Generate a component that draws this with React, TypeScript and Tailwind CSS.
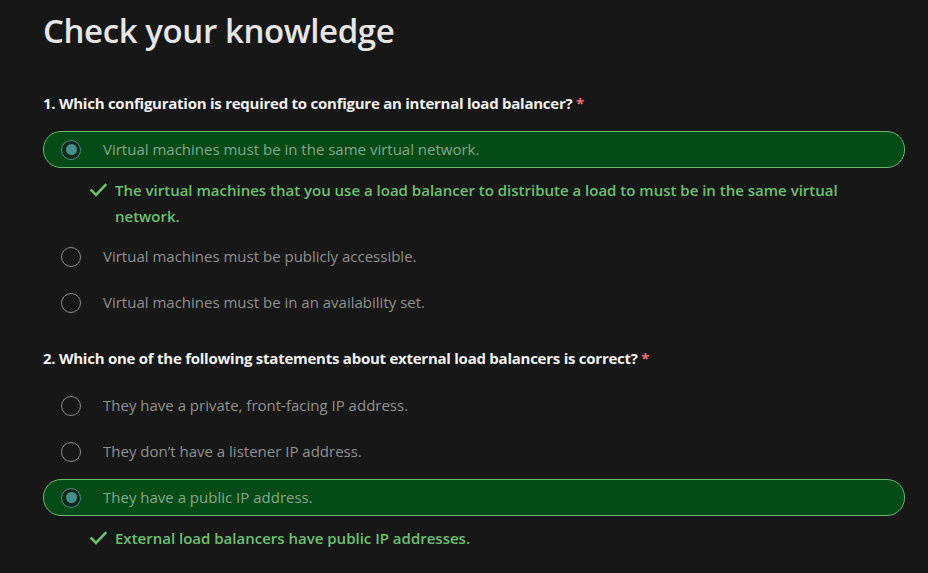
import React from "react";

interface Option {
  text: string;
  selected?: boolean;
  feedback?: string;
}

interface Question {
  title: string;
  options: Option[];
}

const questions: Question[] = [
  {
    title: "1. Which configuration is required to configure an internal load balancer?",
    options: [
      {
        text: "Virtual machines must be in the same virtual network.",
        selected: true,
        feedback:
          "The virtual machines that you use a load balancer to distribute a load to must be in the same virtual network.",
      },
      { text: "Virtual machines must be publicly accessible." },
      { text: "Virtual machines must be in an availability set." },
    ],
  },
  {
    title: "2. Which one of the following statements about external load balancers is correct?",
    options: [
      { text: "They have a private, front-facing IP address." },
      { text: "They don\u2019t have a listener IP address." },
      {
        text: "They have a public IP address.",
        selected: true,
        feedback: "External load balancers have public IP addresses.",
      },
    ],
  },
];

const Radio: React.FC<{ selected?: boolean }> = ({ selected }) =>
  selected ? (
    <span className="w-[20px] h-[20px] rounded-full border-[1.5px] border-[#4f8a80] bg-[#0f2a1c] flex items-center justify-center flex-shrink-0">
      <span className="w-[11px] h-[11px] rounded-full bg-[#468f8c]" />
    </span>
  ) : (
    <span className="w-[20px] h-[20px] rounded-full border-[1.5px] border-[#8a8a8a] flex-shrink-0" />
  );

const Check = () => (
  <svg width="17" height="14" viewBox="0 0 17 14" className="flex-shrink-0 mt-[6px]">
    <path d="M1.5 7.5 L6 12 L15.5 2" fill="none" stroke="#6cc070" strokeWidth="2.6" strokeLinecap="square" />
  </svg>
);

export default function App() {
  return (
    <div
      className="w-[928px] h-[573px] bg-[#171717] overflow-hidden px-[43px] pt-[10px]"
      style={{ fontFamily: '"Open Sans", "Noto Sans", sans-serif' }}
    >
      <h1 className="text-[33px] font-semibold text-[#e6e6e6] leading-[42px] tracking-[-0.4px]">
        Check your knowledge
      </h1>

      {questions.map((q, qi) => (
        <div key={qi} className={qi === 0 ? "mt-[41px]" : "mt-[27px]"}>
          <p className="text-[15px] font-bold text-[#f0f0f0] leading-[20px] tracking-[-0.25px]">
            {q.title} <span className="text-[#f1707b]">*</span>
          </p>
          <div className={"flex flex-col gap-[9px] " + (qi === 0 ? "mt-[18px]" : "mt-[19px]")}>
            {q.options.map((o, oi) => (
              <div key={oi}>
                <div
                  className={
                    "h-[37px] w-[862px] rounded-[18px] flex items-center pl-[17px] border " +
                    (o.selected ? "bg-[#054b18] border-[#6cb66f]" : "border-transparent")
                  }
                >
                  <Radio selected={o.selected} />
                  <span
                    className={
                      "ml-[22px] text-[15px] " +
                      (o.selected ? "text-[#86a689]" : "text-[#909090]")
                    }
                  >
                    {o.text}
                  </span>
                </div>
                {o.feedback && (
                  <div className="flex gap-[8px] pl-[47px] mt-[9px]">
                    <Check />
                    <p className="w-[760px] text-[15px] font-semibold text-[#6cc070] leading-[26px]">
                      {o.feedback}
                    </p>
                  </div>
                )}
              </div>
            ))}
          </div>
        </div>
      ))}
    </div>
  );
}
